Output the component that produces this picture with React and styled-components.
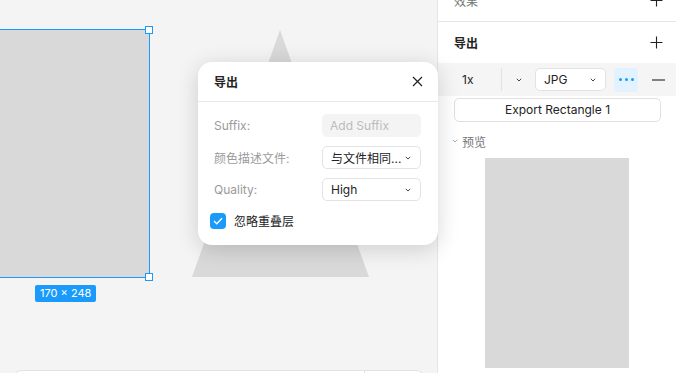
import React from "react";
import styled, { createGlobalStyle } from "styled-components";

const GlobalStyle = createGlobalStyle`
  html, body {
    margin: 0;
    padding: 0;
    overflow: hidden;
  }
  body {
    font-family: Inter, "Noto Sans CJK SC", sans-serif;
    font-size: 12px;
    color: #222;
  }
`;

const BLUE = "#1a9bfc";

const Screen = styled.div`
  display: flex;
  width: 676px;
  height: 373px;
  overflow: hidden;
`;

/* 画布 */
const Canvas = styled.div`
  position: relative;
  flex: 1;
  background: #f4f4f4;
  overflow: visible;
  z-index: 2;
`;

const Rect = styled.div`
  position: absolute;
  left: -30px;
  top: 29px;
  width: 180px;
  height: 249px;
  background: #d9d9d9;
  border: 1px solid ${BLUE};
  box-sizing: border-box;
`;

const Handle = styled.div`
  position: absolute;
  right: -4px;
  ${p => (p.$bottom ? "bottom: -4px;" : "top: -4px;")}
  width: 6px;
  height: 6px;
  background: #fff;
  border: 1px solid ${BLUE};
`;

const SizeBadge = styled.div`
  position: absolute;
  left: 35px;
  top: 285px;
  height: 17px;
  padding: 0 5px;
  line-height: 17px;
  border-radius: 2px;
  background: ${BLUE};
  color: #fff;
  font-size: 11px;
`;

const Triangle = styled.svg`
  position: absolute;
  left: 192px;
  top: 30px;
`;

const BottomBar = styled.div`
  position: absolute;
  left: 12px;
  top: 370px;
  width: 412px;
  height: 30px;
  display: flex;
  justify-content: flex-end;
  background: #fff;
  border: 1px solid #e2e2e2;
  border-radius: 10px 10px 0 0;

  span {
    width: 60px;
    border-left: 1px solid #e2e2e2;
  }
`;

/* 导出弹窗 */
const Dialog = styled.div`
  position: absolute;
  left: 198px;
  top: 62px;
  width: 240px;
  background: #fff;
  border-radius: 14px;
  box-shadow: 0 4px 22px rgba(0, 0, 0, 0.16);
  z-index: 5;
`;

const DialogHead = styled.div`
  display: flex;
  align-items: center;
  justify-content: space-between;
  height: 39px;
  padding: 0 15px 0 16px;
  border-bottom: 1px solid #e8e8e8;
  font-weight: 600;
  font-size: 12px;
`;

const DialogBody = styled.div`
  display: flex;
  flex-direction: column;
  gap: 9px;
  padding: 12px 17px 16px 16px;
`;

const Field = styled.div`
  display: flex;
  align-items: center;
  justify-content: space-between;
  height: 23px;
`;

const Label = styled.div`
  color: #9a9a9a;
  font-size: 12px;
`;

const TextBox = styled.div`
  box-sizing: border-box;
  width: 99px;
  height: 23px;
  line-height: 23px;
  padding: 0 8px;
  border-radius: 5px;
  background: #f4f4f4;
  color: #bcbcbc;
`;

const Select = styled.div`
  box-sizing: border-box;
  display: flex;
  align-items: center;
  justify-content: space-between;
  width: ${p => p.$w || 99}px;
  height: 23px;
  padding: 0 9px 0 8px;
  border: 1px solid #e3e3e3;
  border-radius: 5px;
  background: #fff;
  color: #222;
  white-space: nowrap;
`;

const CheckRow = styled.div`
  display: flex;
  align-items: center;
  gap: 8px;
  margin: 2px 0 0 -4px;
`;

const CheckBox = styled.div`
  display: flex;
  align-items: center;
  justify-content: center;
  width: 16px;
  height: 16px;
  border-radius: 4px;
  background: ${BLUE};
`;

/* 右侧面板 */
const Panel = styled.div`
  width: 238px;
  border-left: 1px solid #e6e6e6;
  background: #fff;
  display: flex;
  flex-direction: column;
`;

const Section = styled.div`
  display: flex;
  align-items: center;
  justify-content: space-between;
  height: ${p => p.$h || 41}px;
  padding: 0 13px 0 16px;
  font-size: 12px;
  ${p => p.$top && "margin-top: -21px; border-bottom: 1px solid #e6e6e6; color: #777;"}
  ${p => p.$bold && "font-weight: 600; color: #222;"}
`;

const ExportRow = styled.div`
  display: flex;
  align-items: center;
  height: 33px;
  background: #f5f5f5;
  padding-left: 24px;
`;

const Scale = styled.div`
  width: 39px;
  height: 23px;
  line-height: 23px;
  border-right: 1px solid #e2e2e2;
`;

const ScaleArrow = styled.div`
  display: flex;
  justify-content: center;
  width: 33px;
`;

const Chevron = styled.svg`
  flex-shrink: 0;
`;

const MoreBtn = styled.div`
  display: flex;
  align-items: center;
  justify-content: center;
  gap: 3px;
  width: 24px;
  height: 24px;
  border-radius: 4px;
  background: #e3f2ff;
  margin-left: 8px;

  i {
    width: 3px;
    height: 3px;
    border-radius: 50%;
    background: ${BLUE};
  }
`;

const Minus = styled.svg`
  margin-left: 14px;
`;

const ExportButton = styled.div`
  margin: 2px 15px 0 16px;
  height: 22px;
  line-height: 22px;
  text-align: center;
  border: 1px solid #e0e0e0;
  border-radius: 5px;
  color: #222;
`;

const PreviewHead = styled.div`
  display: flex;
  align-items: center;
  gap: 4px;
  height: 18px;
  margin-top: 10px;
  padding-left: 14px;
  color: #777;
`;

const Preview = styled.div`
  align-self: center;
  width: 144px;
  height: 210px;
  margin-top: 8px;
  background: #d9d9d9;
`;

const Plus = () => (
  <svg width="13" height="13" viewBox="0 0 13 13">
    <path d="M6.5 0.5v12M0.5 6.5h12" stroke="#222" strokeWidth="1.1" />
  </svg>
);

const Down = ({ c = "#444" }) => (
  <Chevron width="6" height="4" viewBox="0 0 6 4">
    <path d="M0.8 0.8l2.2 2.2L5.2 0.8" fill="none" stroke={c} strokeWidth="1" />
  </Chevron>
);

export default function App() {
  return <>
    <GlobalStyle />
    <Screen>
      <Canvas>
        <Triangle width="177" height="248" viewBox="0 0 177 248">
          <polygon points="88,0 177,247 0,247" fill="#d9d9d9" />
        </Triangle>
        <Rect>
          <Handle />
          <Handle $bottom />
        </Rect>
        <SizeBadge>170 × 248</SizeBadge>
        <BottomBar><span /></BottomBar>

        <Dialog>
          <DialogHead>
            <span>导出</span>
            <svg width="11" height="11" viewBox="0 0 11 11">
              <path d="M1 1l9 9M10 1l-9 9" stroke="#222" strokeWidth="1.2" />
            </svg>
          </DialogHead>
          <DialogBody>
            <Field>
              <Label>Suffix:</Label>
              <TextBox>Add Suffix</TextBox>
            </Field>
            <Field>
              <Label>颜色描述文件:</Label>
              <Select>与文件相同... <Down /></Select>
            </Field>
            <Field>
              <Label>Quality:</Label>
              <Select>High <Down /></Select>
            </Field>
            <CheckRow>
              <CheckBox>
                <svg width="10" height="8" viewBox="0 0 10 8">
                  <path d="M1 4l2.8 2.8L9 1.2" fill="none" stroke="#fff" strokeWidth="1.3" />
                </svg>
              </CheckBox>
              <span>忽略重叠层</span>
            </CheckRow>
          </DialogBody>
        </Dialog>
      </Canvas>

      <Panel>
        <Section $top $h={42}>
          <span>效果</span>
          <Plus />
        </Section>
        <Section $bold>
          <span>导出</span>
          <Plus />
        </Section>
        <ExportRow>
          <Scale>1x</Scale>
          <ScaleArrow><Down /></ScaleArrow>
          <Select $w={71}>JPG <Down /></Select>
          <MoreBtn><i /><i /><i /></MoreBtn>
          <Minus width="13" height="2" viewBox="0 0 13 2">
            <path d="M0 1h13" stroke="#222" strokeWidth="1.1" />
          </Minus>
        </ExportRow>
        <ExportButton>Export Rectangle 1</ExportButton>
        <PreviewHead>
          <Down c="#aaa" />
          <span>预览</span>
        </PreviewHead>
        <Preview />
      </Panel>
    </Screen>
  </>;
}
